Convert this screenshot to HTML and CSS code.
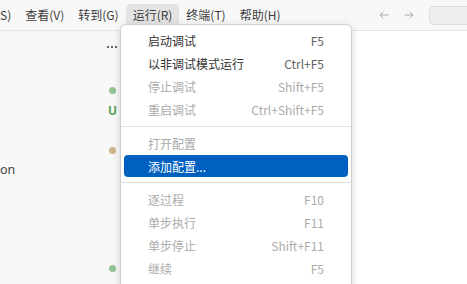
FILE: index.html
```html
<!DOCTYPE html>
<html lang="zh-CN">
<head>
    <meta charset="UTF-8">
    <meta name="viewport" content="width=device-width, initial-scale=1.0">
    <title>运行菜单</title>
    <link rel="stylesheet" href="styles.css">
</head>
<body>
    <div class="titlebar">
        <div class="menubar">
            <div class="menu-title first">S)</div>
            <div class="menu-title">查看(V)</div>
            <div class="menu-title">转到(G)</div>
            <div class="menu-title open">运行(R)</div>
            <div class="menu-title">终端(T)</div>
            <div class="menu-title">帮助(H)</div>
        </div>
        <div class="nav">
            <svg class="arrow" width="10" height="10" viewBox="0 0 10 10">
                <path d="M9.5 5H1M4.5 1.5L1 5l3.5 3.5" fill="none" stroke="#a8a8a8" stroke-width="1"/>
            </svg>
            <svg class="arrow" width="10" height="10" viewBox="0 0 10 10">
                <path d="M0.5 5H9M5.5 1.5L9 5 5.5 8.5" fill="none" stroke="#a8a8a8" stroke-width="1"/>
            </svg>
        </div>
        <div class="search"></div>
    </div>

    <div class="workbench">
        <div class="sidebar">
            <div class="sidebar-head">
                <span class="more"><i></i><i></i><i></i></span>
            </div>
            <div class="tree">
                <div class="row"><span class="dot green"></span></div>
                <div class="row"><span class="letter">U</span></div>
                <div class="row"></div>
                <div class="row"><span class="dot tan"></span></div>
                <div class="row"><span class="name">on</span></div>
                <div class="row"></div>
                <div class="row"></div>
                <div class="row"></div>
                <div class="row"></div>
                <div class="row"><span class="dot green"></span></div>
            </div>
        </div>
        <div class="editor"></div>
    </div>

    <div class="dropdown">
        <div class="item"><span class="label">启动调试</span><span class="key">F5</span></div>
        <div class="item"><span class="label">以非调试模式运行</span><span class="key">Ctrl+F5</span></div>
        <div class="item disabled"><span class="label">停止调试</span><span class="key">Shift+F5</span></div>
        <div class="item disabled"><span class="label">重启调试</span><span class="key">Ctrl+Shift+F5</span></div>
        <div class="separator"></div>
        <div class="item disabled"><span class="label">打开配置</span></div>
        <div class="item active"><span class="label">添加配置...</span></div>
        <div class="separator"></div>
        <div class="item disabled"><span class="label">逐过程</span><span class="key">F10</span></div>
        <div class="item disabled"><span class="label">单步执行</span><span class="key">F11</span></div>
        <div class="item disabled"><span class="label">单步停止</span><span class="key">Shift+F11</span></div>
        <div class="item disabled"><span class="label">继续</span><span class="key">F5</span></div>
    </div>
</body>
</html>
```

FILE: styles.css
```css
html, body {
    margin: 0;
    padding: 0;
    height: 100%;
    overflow: hidden;
}

body {
    font-family: "Noto Sans CJK SC", "Noto Sans", sans-serif;
    font-size: 12px;
    color: #333;
    background-color: #ffffff;
    position: relative;
}

.titlebar {
    display: flex;
    align-items: center;
    height: 30px;
    background-color: #f8f8f8;
    border-bottom: 1px solid #e5e5e5;
}

.menubar {
    display: flex;
    align-items: center;
}

.menu-title {
    height: 22px;
    line-height: 22px;
    padding: 0 7px;
    border-radius: 4px;
    color: #3b3b3b;
    white-space: nowrap;
}

.menu-title.first {
    padding-left: 0;
}

.menu-title.open {
    background-color: #e4e4e4;
}

.nav {
    display: flex;
    align-items: center;
    gap: 15px;
    margin-left: auto;
}

.arrow {
    display: block;
}

.search {
    flex: 0 0 38px;
    height: 19px;
    margin-left: 15px;
    background-color: #efefef;
    border: 1px solid #dcdcdc;
    border-right: none;
    border-radius: 5px 0 0 5px;
    box-sizing: border-box;
}

.workbench {
    display: flex;
    height: calc(100% - 31px);
}

.sidebar {
    width: 120px;
    background-color: #f8f8f8;
}

.sidebar-head {
    height: 32px;
    display: flex;
    align-items: center;
    justify-content: flex-end;
    padding-right: 3px;
}

.more {
    display: flex;
    gap: 2px;
}

.more i {
    width: 2px;
    height: 2px;
    background-color: #666;
}

.tree {
    padding-top: 18px;
}

.row {
    height: 19.75px;
    display: flex;
    align-items: center;
    justify-content: flex-end;
    padding-right: 4px;
}

.dot {
    width: 7px;
    height: 7px;
    border-radius: 50%;
}

.dot.green {
    background-color: #93c493;
}

.dot.tan {
    background-color: #cdb38c;
}

.letter {
    font-family: "Noto Sans", sans-serif;
    font-size: 12px;
    font-weight: bold;
    color: #5aa55c;
    margin-right: -1px;
}

.name {
    margin-right: auto;
    font-family: "Noto Sans", sans-serif;
    font-size: 12.5px;
    color: #444;
}

.editor {
    flex: 1;
    background-color: #ffffff;
}

/* dropdown of the 运行 menu, drawn over the workbench */
.dropdown {
    position: absolute;
    left: 120px;
    top: 24px;
    width: 232px;
    box-sizing: border-box;
    padding: 4px 0 12px;
    background-color: #ffffff;
    border: 1px solid #cecece;
    border-radius: 6px;
    box-shadow: 0 2px 8px rgba(0, 0, 0, 0.16);
}

.item {
    display: flex;
    align-items: center;
    justify-content: space-between;
    height: 23px;
    margin: 0 3px;
    padding: 0 24px;
    border-radius: 4px;
    white-space: nowrap;
}

.label {
    color: #333;
}

.key {
    color: #5f5f5f;
    font-size: 12px;
}

.item.disabled .label,
.item.disabled .key {
    color: #ababab;
}

.item.active {
    background-color: #0060c0;
    height: 22px;
    margin-bottom: 1px;
}

.item.active .label {
    color: #ffffff;
}

.separator {
    height: 1px;
    margin: 5px 0;
    background-color: #e2e2e2;
}
```
